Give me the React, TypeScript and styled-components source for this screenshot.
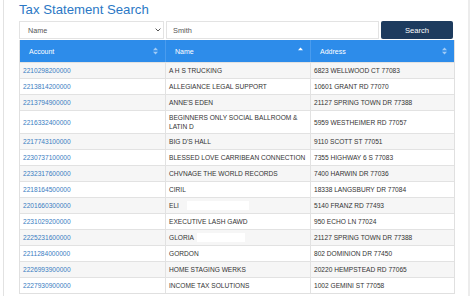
import React from "react";
import styled, { createGlobalStyle } from "styled-components";

const Global = createGlobalStyle`
  html, body { margin: 0; padding: 0; background: #fff; }
  body { font-family: "Liberation Sans", Arial, sans-serif; }
`;

const Page = styled.div`
  margin-left: 3px;
  width: 467px;
  height: 296px;
  box-sizing: border-box;
  border-left: 1px solid #e2e2e2;
  border-right: 2px solid #ececec;
  padding: 0 15px 0 15px;
  overflow: hidden;
`;

const Title = styled.h1`
  margin: 0;
  height: 21px;
  padding-top: 1px;
  box-sizing: border-box;
  font-size: 13.2px;
  line-height: 17px;
  font-weight: normal;
  color: #2b78c5;
`;

const SearchRow = styled.div`
  display: grid;
  grid-template-columns: 145px 1fr 72px;
  column-gap: 2px;
  height: 18px;
  margin-bottom: 1px;
`;

const SelectBox = styled.div`
  display: flex;
  align-items: center;
  justify-content: space-between;
  border: 1px solid #e3e3e3;
  padding: 0 2px 0 8px;
  font-size: 7.2px;
  color: #555;
  background: #fff;
`;

const Input = styled.div`
  display: flex;
  align-items: center;
  border: 1px solid #e3e3e3;
  padding: 0 6px;
  font-size: 7.4px;
  color: #555;
`;

const Button = styled.button`
  border: none;
  border-radius: 2px;
  background: #1d3b5e;
  color: #fff;
  font-family: inherit;
  font-size: 7.6px;
  padding: 0;
`;

const Table = styled.div`
  display: grid;
  grid-template-columns: 145px 145px 1fr;
  border: 1px solid #e0e0e0;
  border-top: none;
  width: 436px;
  box-sizing: border-box;
`;

const Head = styled.div<{ first?: boolean }>`
  display: flex;
  align-items: center;
  justify-content: space-between;
  height: 22px;
  background: #2d8cea;
  color: #fff;
  font-size: 7px;
  padding: 0 7px 0 9px;
  border-left: ${(p) => (p.first ? "none" : "1px solid #4a9cee")};
`;

const Cell = styled.div<{ odd: boolean; first?: boolean; link?: boolean }>`
  display: flex;
  align-items: center;
  background: ${(p) => (p.odd ? "#f6f6f6" : "#fff")};
  border-top: 1px solid #e2e2e2;
  border-left: ${(p) => (p.first ? "none" : "1px solid #e2e2e2")};
  padding: 2px 3px;
  font-size: 6.6px;
  line-height: 9px;
  min-height: 11px;
  color: ${(p) => (p.link ? "#3a7dc2" : "#333")};
`;

const Redact = styled.span<{ gap: number; w: number }>`
  display: inline-block;
  width: ${(p) => p.w}px;
  height: 9px;
  background: #fff;
  margin-left: ${(p) => p.gap}px;
`;

const Sort = ({ mode }: { mode: "both" | "up" }) => (
  <svg width="5" height="8" viewBox="0 0 5 8">
    <path d="M0 3.2 L2.5 0.5 L5 3.2 Z" fill={mode === "up" ? "#fff" : "rgba(255,255,255,0.55)"} />
    {mode === "both" && <path d="M0 4.8 L2.5 7.5 L5 4.8 Z" fill="rgba(255,255,255,0.55)" />}
  </svg>
);

const Chevron = () => (
  <svg width="6" height="4" viewBox="0 0 6 4">
    <path d="M0.6 0.6 L3 3 L5.4 0.6" stroke="#555" strokeWidth="1" fill="none" />
  </svg>
);

type Row = { acct: string; name: string; addr: string; red?: [number, number] };

const rows: Row[] = [
  { acct: "2210298200000", name: "A H S TRUCKING", addr: "6823 WELLWOOD CT 77083" },
  { acct: "2213814200000", name: "ALLEGIANCE LEGAL SUPPORT", addr: "10601 GRANT RD 77070" },
  { acct: "2213794900000", name: "ANNE'S EDEN", addr: "21127 SPRING TOWN DR 77388" },
  { acct: "2216332400000", name: "BEGINNERS ONLY SOCIAL BALLROOM & LATIN D", addr: "5959 WESTHEIMER RD 77057" },
  { acct: "2217743100000", name: "BIG D'S HALL", addr: "9110 SCOTT ST 77051" },
  { acct: "2230737100000", name: "BLESSED LOVE CARRIBEAN CONNECTION", addr: "7355 HIGHWAY 6 S 77083" },
  { acct: "2232317600000", name: "CHVNAGE THE WORLD RECORDS", addr: "7400 HARWIN DR 77036" },
  { acct: "2218164500000", name: "CIRIL", addr: "18338 LANGSBURY DR 77084" },
  { acct: "2201660300000", name: "ELI", addr: "5140 FRANZ RD 77493", red: [8, 62] },
  { acct: "2231029200000", name: "EXECUTIVE LASH GAWD", addr: "950 ECHO LN 77024" },
  { acct: "2225231600000", name: "GLORIA", addr: "21127 SPRING TOWN DR 77388", red: [3, 48] },
  { acct: "2211284000000", name: "GORDON", addr: "802 DOMINION DR 77450" },
  { acct: "2226993900000", name: "HOME STAGING WERKS", addr: "20220 HEMPSTEAD RD 77065" },
  { acct: "2227930900000", name: "INCOME TAX SOLUTIONS", addr: "1002 GEMINI ST 77058" },
];

export default function App() {
  return (
    <>
      <Global />
      <Page>
        <Title>Tax Statement Search</Title>
        <SearchRow>
          <SelectBox>
            <span>Name</span>
            <Chevron />
          </SelectBox>
          <Input>Smith</Input>
          <Button>Search</Button>
        </SearchRow>
        <Table>
          <Head first>
            <span>Account</span>
            <Sort mode="both" />
          </Head>
          <Head>
            <span>Name</span>
            <Sort mode="up" />
          </Head>
          <Head>
            <span>Address</span>
            <Sort mode="both" />
          </Head>
          {rows.map((r, i) => {
            const odd = i % 2 === 0;
            return (
              <React.Fragment key={r.acct}>
                <Cell odd={odd} first link>
                  {r.acct}
                </Cell>
                <Cell odd={odd}>
                  <span>{r.name}</span>
                  {r.red && <Redact gap={r.red[0]} w={r.red[1]} />}
                </Cell>
                <Cell odd={odd}>{r.addr}</Cell>
              </React.Fragment>
            );
          })}
        </Table>
      </Page>
    </>
  );
}
